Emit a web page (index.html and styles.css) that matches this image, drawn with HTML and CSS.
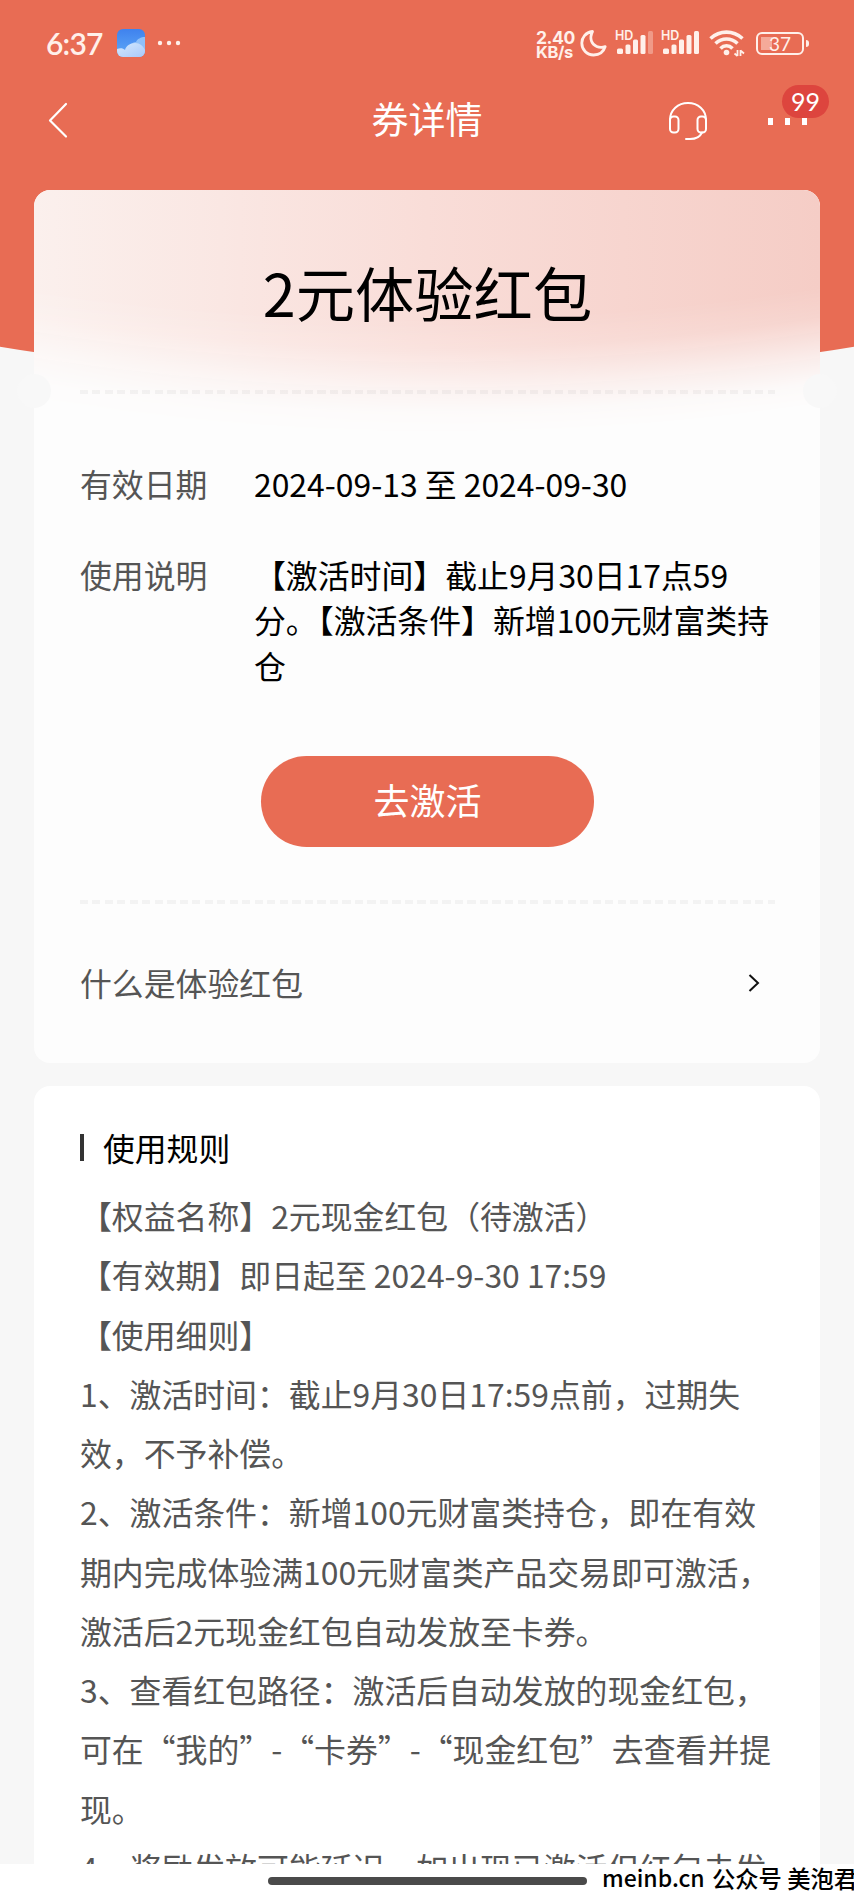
FILE: index.html
```html
<!DOCTYPE html>
<html lang="zh-CN">
<head>
    <meta charset="UTF-8">
    <meta name="viewport" content="width=device-width, initial-scale=1.0">
    <title>券详情</title>
    <link rel="stylesheet" href="styles.css">
</head>
<body>
<div class="screen">
    <div class="header-bg"></div>

    <!-- 状态栏 -->
    <div class="status-bar">
        <span class="time">6:37</span>
        <svg class="weather" width="28" height="28" viewBox="0 0 28 28">
            <defs>
                <linearGradient id="sky" x1="0" y1="0" x2="0" y2="1"><stop offset="0" stop-color="#3f82ee"/><stop offset="1" stop-color="#5fa9f7"/></linearGradient>
                <linearGradient id="cloud" x1="0" y1="0" x2="1" y2="1"><stop offset="0" stop-color="#d5e9fd"/><stop offset="1" stop-color="#a9c9fa"/></linearGradient>
                <clipPath id="tile"><rect width="28" height="28" rx="6"/></clipPath>
            </defs>
            <g clip-path="url(#tile)">
                <rect width="28" height="28" fill="url(#sky)"/>
                <path d="M13 18c1-4 4-5 6-5 1-3 5-5 9-5v20H13z" fill="#8fc0f9"/>
                <path d="M0 20c3-1 6-1 8 1 1-4 5-7 10-7 5 0 8 3 10 7v7H0z" fill="url(#cloud)"/>
            </g>
        </svg>
        <svg class="more" width="24" height="6" viewBox="0 0 24 6" fill="#fff0ea"><circle cx="3" cy="3" r="2.2"/><circle cx="12" cy="3" r="2.2"/><circle cx="21" cy="3" r="2.2"/></svg>

        <div class="status-right">
            <div class="speed"><span>2.40</span><span>KB/s</span></div>
            <svg class="moon" width="27" height="28" viewBox="0 0 27 28" fill="none" stroke="#fff0ea" stroke-width="2.800" stroke-linejoin="round"><path d="M12.500 2.500C5.500 3.500 1.800 8.500 1.800 14c0 6.800 5 12 11.800 12 5.600 0 10-3.200 11.600-8.300-6.200 2-12-.8-13.700-5.600-1.200-3.500-.6-6.600 1-9.600z"/></svg>
            <div class="signal">
                <span>HD</span>
                <svg width="37" height="24" viewBox="0 0 37 24" fill="#fff0ea"><rect y="17.500" width="6" height="5.500" rx="1.500"/><rect x="8.500" y="13.500" width="5" height="9.500" rx="1.500"/><rect x="16" y="8.500" width="5" height="14.500" rx="1.500"/><rect x="23.500" y="4" width="5" height="19" rx="1.500"/><rect x="31" y="0" width="5" height="23" rx="1.500" opacity=".35"/></svg>
            </div>
            <div class="signal">
                <span>HD</span>
                <svg width="37" height="24" viewBox="0 0 37 24" fill="#fff0ea"><rect y="17.500" width="6" height="5.500" rx="1.500"/><rect x="8.500" y="13.500" width="5" height="9.500" rx="1.500"/><rect x="16" y="8.500" width="5" height="14.500" rx="1.500"/><rect x="23.500" y="4" width="5" height="19" rx="1.500"/><rect x="31" y="0" width="5" height="23" rx="1.500"/></svg>
            </div>
            <svg class="wifi" width="36" height="28" viewBox="0 0 36 28" fill="none" stroke="#fff0ea">
                <path d="M1.500 9.500C11 1 24 1 33.500 9.500M6.500 14.500c6.500-6 15.500-6 22 0M11.500 19.500c3.500-3.600 8.500-3.600 12 0" stroke-width="3.600"/>
                <circle cx="17.500" cy="23.500" r="2.800" fill="#fff0ea" stroke="none"/>
                <path d="M28.500 21v6M25.500 24.500l3 2.500M31.500 27v-6M31.500 21.500l3.500 3" stroke-width="1.800"/>
            </svg>
            <div class="battery"><span>37</span></div>
        </div>
    </div>

    <!-- 导航栏 -->
    <div class="nav-bar">
        <svg class="back" width="22" height="38" viewBox="0 0 22 38" fill="none" stroke="#fff" stroke-width="2.200" stroke-linecap="round" stroke-linejoin="round"><path d="M20 3L4 19.500 20 35.500"/></svg>
        <h1>券详情</h1>
        <svg class="service" width="40" height="40" viewBox="0 0 40 40" fill="none" stroke="#fff" stroke-width="2">
            <path d="M2 20v-1C2 9 10 2 20 2s18 7 18 17v1"/>
            <rect x="2" y="15.500" width="8.500" height="16" rx="3.500"/><rect x="29.500" y="15.500" width="8.500" height="16" rx="3.500"/>
            <path d="M34 31.500c-2 4.500-6 6.500-12 6.500h-4" stroke-linecap="round"/>
        </svg>
        <div class="menu"><i></i><i></i><i></i><span class="badge">99</span></div>
    </div>

    <!-- 券信息 -->
    <div class="card coupon">
        <h2>2元体验红包</h2>
        <div class="dash notch"></div>
        <dl>
            <dt>有效日期</dt>
            <dd>2024-09-13 至 2024-09-30</dd>
            <dt>使用说明</dt>
            <dd>【激活时间】截止9月30日17点59分。【激活条件】新增100元财富类持仓</dd>
        </dl>
        <button>去激活</button>
        <div class="dash"></div>
        <div class="faq">
            <span>什么是体验红包</span>
            <svg width="12" height="20" viewBox="0 0 12 20" fill="none" stroke="#111" stroke-width="2"><path d="M1.500 3L10 11l-8.500 8"/></svg>
        </div>
    </div>

    <!-- 使用规则 -->
    <div class="card rules">
        <h3>使用规则</h3>
        <p>【权益名称】2元现金红包（待激活）</p>
        <p>【有效期】即日起至 2024-9-30 17:59</p>
        <p>【使用细则】</p>
        <p>1、激活时间：截止9月30日17:59点前，过期失效，不予补偿。</p>
        <p>2、激活条件：新增100元财富类持仓，即在有效期内完成体验满100元财富类产品交易即可激活，激活后2元现金红包自动发放至卡券。</p>
        <p>3、查看红包路径：激活后自动发放的现金红包，可在“我的”-“卡券”-“现金红包”去查看并提现。</p>
        <p>4、奖励发放可能延迟，如出现已激活但红包未发</p>
    </div>

    <div class="bottom-bar">
        <div class="home-line"></div>
        <div class="watermark"><b>meinb.cn</b><span>公众号 美泡君</span></div>
    </div>
</div>
</body>
</html>
```
FILE: styles.css
```css
*{box-sizing:border-box;margin:0;padding:0;}
body{background:#f7f7f7;font-family:"Noto Sans CJK SC",sans-serif;font-size:31.870px;color:#000;}
svg{display:block;flex:none;}
.screen{position:relative;width:854px;height:1898px;overflow:hidden;display:flex;flex-direction:column;}
.header-bg{position:absolute;top:0;left:0;width:100%;height:382px;background:#e86c54;clip-path:circle(2600px at 50% -2218px);}

/* 状态栏 */
.status-bar{position:relative;height:86px;padding:0 46px;display:flex;align-items:center;flex:none;color:#fff0ea;font-family:Lato,sans-serif;}
.time{width:71px;font-size:30px;font-weight:600;line-height:30px;letter-spacing:-.8px;}
.more{margin-left:12px;}
.status-right{margin-left:auto;display:flex;align-items:center;}
.speed{width:44px;display:flex;flex-direction:column;font-family:Inter,sans-serif;font-weight:700;font-size:16.500px;line-height:15px;letter-spacing:-.4px;margin-top:3px;}
.speed span:first-child{font-size:17.500px;}
.signal{position:relative;margin-left:9px;}
.moon{margin-right:1px;}
.signal span{position:absolute;top:-2px;left:-2px;font:600 12.500px/14px Inter,sans-serif;}
.wifi{margin-left:9px;}
.battery{position:relative;width:48px;height:23px;margin:0 4px 0 11px;border:2.500px solid #fff0ea;border-radius:6px;background:linear-gradient(#f5aa99,#f5aa99) 3px 50%/11px 13px no-repeat;text-align:center;font-size:19px;line-height:19px;}
.battery::after{content:"";position:absolute;right:-7px;top:6px;width:3px;height:7px;border-radius:0 3px 3px 0;background:#fff0ea;}

/* 导航栏 */
.nav-bar{position:relative;height:104px;padding:0 46px;display:grid;grid-template-columns:1fr auto 1fr 0;align-items:start;flex:none;color:#fff;}
.back{margin-top:15px;}
.nav-bar h1{font-size:37px;font-weight:400;line-height:54px;margin-top:5px;}
.service{justify-self:end;margin:15px 100px 0 0;}
.menu{position:absolute;left:768px;top:32px;display:flex;gap:12px;}
.menu i{width:5px;height:7px;background:#fff;}
.badge{position:absolute;left:14px;top:-33px;width:47px;height:33px;border-radius:17px;background:#dd453e;font:25px/33px Lato,sans-serif;text-align:center;}

.card{position:relative;width:786px;margin:0 auto;border-radius:16px;background:#fdfdfd;padding:0 45px 0 46px;flex:none;}
.coupon{height:873px;}
.coupon::before{content:"";position:absolute;left:0;top:0;width:100%;height:250px;border-radius:16px 16px 0 0;background:linear-gradient(90deg,#fbf0ed,#f9ddd8 50%,#f5cdc6);-webkit-mask-image:radial-gradient(circle at 50% -2380px,#000 2508px,rgba(0,0,0,.85) 2538px,rgba(0,0,0,.3) 2580px,rgba(0,0,0,.08) 2602px,transparent 2625px);mask-image:radial-gradient(circle at 50% -2380px,#000 2508px,rgba(0,0,0,.85) 2538px,rgba(0,0,0,.3) 2580px,rgba(0,0,0,.08) 2602px,transparent 2625px);}
.coupon>*{position:relative;}
h2{height:200px;padding-top:58px;font-size:59.300px;font-weight:400;line-height:86px;text-align:center;}
.dash{height:4px;background:repeating-linear-gradient(90deg,rgba(0,0,0,.04) 0 8px,transparent 8px 12.500px);}
/* 左右半圆缺口 */
.notch::before,.notch::after{content:"";position:absolute;top:-16px;width:34px;height:34px;border-radius:50%;background:#f8f8f8;}
.notch::before{left:-63px;}
.notch::after{right:-62px;}
dl{display:grid;grid-template-columns:174px 1fr;row-gap:45.400px;padding-top:67px;line-height:45.400px;}
dt,.faq{color:#555;}
.coupon button{display:block;width:333px;height:91px;margin:68px auto 53px;border:0;border-radius:46px;background:#e86c54;color:#fff;font:36px/85px "Noto Sans CJK SC",sans-serif;padding-bottom:5px;}
.faq{display:flex;justify-content:space-between;align-items:center;height:156px;padding-right:15px;}

.rules{height:778px;margin-top:23px;border-radius:16px 16px 0 0;background:#fff;padding-top:38px;overflow:hidden;line-height:59.270px;color:#555;}
.rules h3{display:flex;align-items:center;height:47px;margin-bottom:15px;font-size:31.800px;font-weight:400;color:#000;}
.rules h3::before{content:"";width:4px;height:27px;margin-right:19px;background:#333;}

.bottom-bar{position:relative;display:flow-root;height:34px;background:#fff;flex:none;}
.home-line{width:319px;height:8px;margin:13px auto 0;border-radius:4px;background:#4a4a4a;}
.watermark{position:absolute;left:602px;top:0;display:flex;font-size:23.300px;line-height:28px;white-space:nowrap;}
.watermark span{font-weight:500;}
.watermark b{width:110px;font:500 23px/27px "Noto Sans CJK SC",sans-serif;}
```
